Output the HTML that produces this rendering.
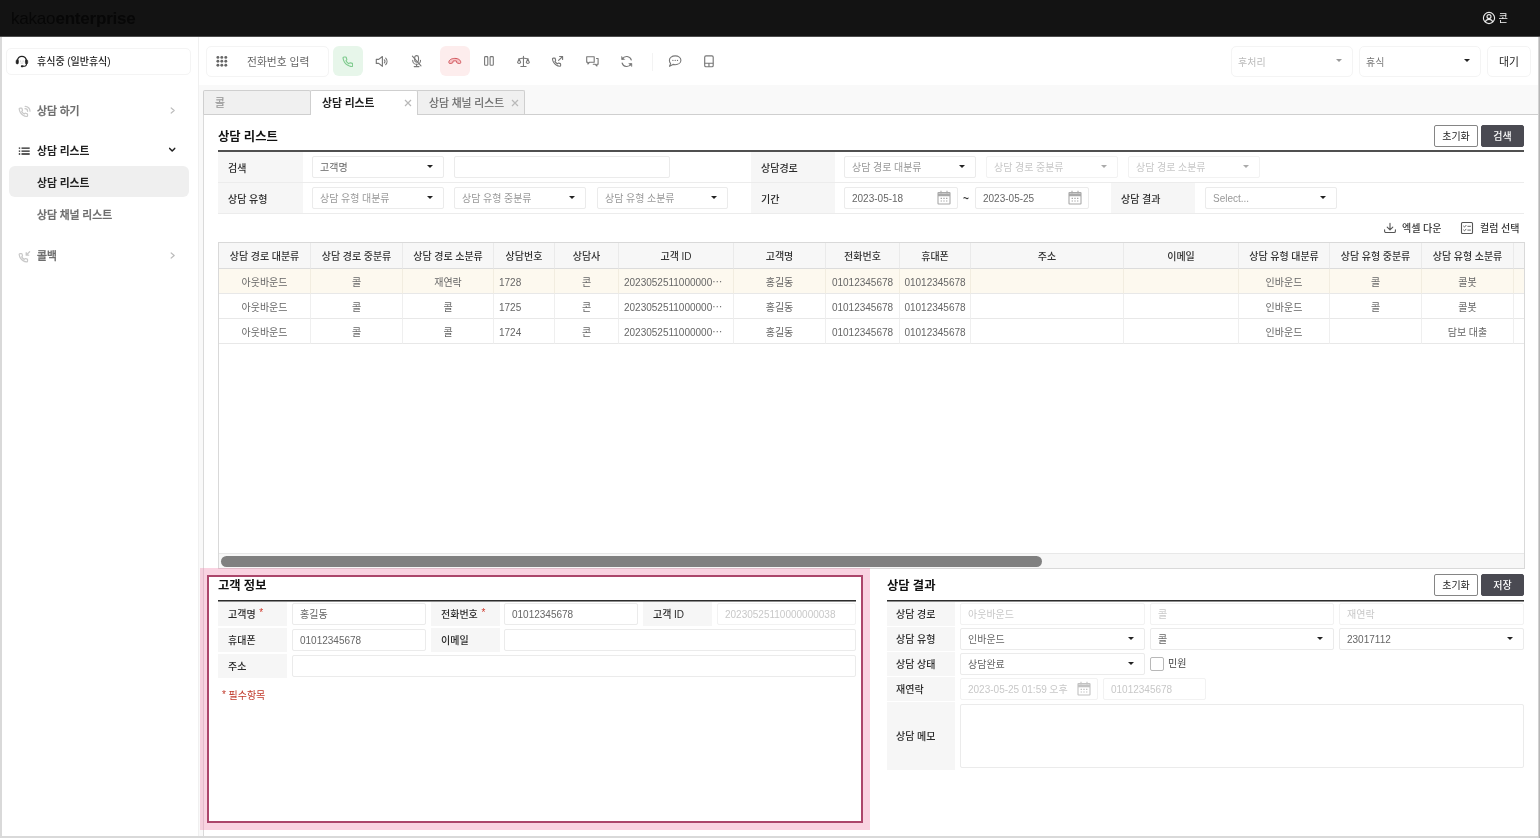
<!DOCTYPE html>
<html lang="ko">
<head>
<meta charset="utf-8">
<title>상담 리스트</title>
<style>
*{box-sizing:border-box;margin:0;padding:0}
html,body{width:1540px;height:838px;overflow:hidden}
body{position:relative;background:#f9f9f9;font-family:"Liberation Sans","Noto Sans CJK KR",sans-serif;font-size:10px;color:#333;line-height:1;word-spacing:-0.02em}
.abs{position:absolute}
svg{display:block}
/* frame */
#frameL{left:0;top:36px;width:2px;height:802px;background:#d9d9d9}
#frameR{left:1538px;top:36px;width:2px;height:802px;background:linear-gradient(90deg,#d2d2d2 50%,#b6b6b6 50%)}
#frameB{left:0;top:836px;width:1538px;height:2px;background:#d9d9d9}
/* header */
#hdr{left:0;top:0;width:1540px;height:36px;background:#131313}
#logo{left:11px;top:8px;font-size:17px;line-height:22px;color:#070707;letter-spacing:-0.2px}
#logo b{font-weight:700}
#user{left:1498.500px;top:11.500px;font-size:10.200px;line-height:14px;color:#f4f4f4}
/* sidebar */
#side{left:2px;top:36px;width:196px;height:800px;background:#fff}
#sideLine{left:198px;top:36px;width:1px;height:800px;background:#f0f0f0}
#status{left:6px;top:48px;width:185px;height:27px;border:1px solid #f4f4f4;border-radius:5px;background:#fff}
#status span{position:absolute;left:30px;top:6px;font-size:10px;line-height:14px;color:#222;font-weight:500}
.mi{left:37px;font-size:10.8px;line-height:16px;color:#6e6e6e;font-weight:500;-webkit-text-stroke:0.3px}
.mi.b{-webkit-text-stroke:0}
.mi.b{font-weight:700;color:#222}
#sel{left:9px;top:166px;width:180px;height:31px;border-radius:6px;background:#efefef}
/* toolbar */
#tool{left:199px;top:36px;width:1339px;height:49px;background:#fff}
.box{border:1px solid #f4f4f4;border-radius:5px;background:#fff}
.tbtxt{font-size:10.8px;line-height:16px}
/* tabs */
.tab{top:90px;height:24px;width:108px;border:1px solid #cfcfcf;border-bottom:none;background:#f0f0f0;border-radius:2px 2px 0 0;font-size:10.8px;line-height:24px;color:#666;padding-left:11px;-webkit-text-stroke:0.200px}
.tab.on{background:#fff;color:#222;font-weight:700;z-index:3;height:25px;-webkit-text-stroke:0}
.tab svg{position:absolute;right:5px;top:8px}
#panel{left:203px;top:114px;width:1335px;height:722px;background:#fff;border-top:1px solid #cfcfcf;border-left:1px solid #dadada}

/* panel content */
.ttl{font-size:12.300px;font-weight:700;color:#111;line-height:18px}
.hr2{height:2px;background:#505050}
.btn{height:22px;border:1px solid #858585;border-radius:2px;background:#fff;font-size:10px;line-height:20px;padding-top:1px;text-align:center;color:#222}
.btn.dk{background:#4a4a52;border-color:#4a4a52;color:#fff;font-weight:500}
.lab{background:#f6f6f6;font-size:10px;font-weight:500;color:#2a2a2a;padding-left:10px;padding-top:2px}
.lab.lb{padding-left:9px;padding-top:1px}
.req{margin-left:1px;position:relative;top:-2px}
.frow{left:218px;width:1306px;height:1px;background:#ececec}
.inp{height:22px;border:1px solid #ebebeb;border-radius:2px;background:#fff;font-size:10px;line-height:22px;color:#666;padding-left:7px;white-space:nowrap;overflow:hidden}
.inp.ph{color:#999}
.inp.dis{border-color:#f2f2f2;color:#c8c8c8}
.inp u{position:absolute;right:10px;top:7.5px;width:0;height:0;border-left:3.5px solid transparent;border-right:3.5px solid transparent;border-top:3.5px solid #222}
.inp.dis u{border-top-color:#aaa}
.inp.dis .cal{opacity:.7}
.cal{position:absolute;right:6.500px;top:2px}
.lnk{font-size:10px;line-height:14px;color:#333;font-weight:500}
/* grid */
#grid{left:218px;top:242px;width:1307px;height:327px;border:1px solid #d9d9d9;background:#fff;overflow:hidden}
#grid table{border-collapse:separate;border-spacing:0;table-layout:fixed;position:absolute;left:0;top:0;width:1305px}
#grid th{height:26px;background:#f7f7f7;border-right:1px solid #eaeaea;border-bottom:1px solid #dcdcdc;font-size:10px;font-weight:500;color:#333;text-align:center;padding:3px 0 0;white-space:nowrap}
#grid td{height:25px;border-right:1px solid #efefef;border-bottom:1px solid #e8e8e8;font-size:10px;color:#666;text-align:center;padding:4px 0 0;white-space:nowrap;overflow:hidden}
#grid td.l{text-align:left;padding-left:5px}
#grid th:last-child,#grid td:last-child{border-right:none}
#grid tr.sel td{background:#fdf9ef;border-right-color:#f2ede0}
#sbar{left:0;top:310px;width:1305px;height:16px;background:#f7f7f7;border-top:1px solid #e8e8e8}
#thumb{left:2px;top:2px;width:821px;height:11px;border-radius:5.500px;background:#808080}
/* highlight */
#hlOuter{left:200px;top:568px;width:670px;height:262px;background:rgba(240,140,175,0.38)}
#hlInner{left:207px;top:575px;width:656px;height:248px;background:#fff;border:2px solid #ab466b}
.req{color:#d0392b}
</style>
</head>
<body>
<div id="wrap" style="position:absolute;left:0;top:0;width:1540px;height:838px;will-change:transform">
<div id="hdr" class="abs">
  <div id="logo" class="abs">kakao<b>enterprise</b></div>
  <svg class="abs" style="left:1481.500px;top:11.400px" width="14" height="14" viewBox="0 0 14 14" fill="none" stroke="#e8e8e8" stroke-width="1.150"><circle cx="7" cy="7" r="5.6"/><circle cx="7" cy="5.6" r="2"/><path d="M3.2 11c.6-1.8 2-2.7 3.8-2.7s3.2.9 3.8 2.7"/></svg>
  <div id="user" class="abs">콘</div>
</div>
<div id="frameL" class="abs"></div><div id="frameR" class="abs"></div><div id="frameB" class="abs"></div>

<div id="side" class="abs"></div>
<div id="sideLine" class="abs"></div>
<div id="status" class="abs"><span>휴식중 (일반휴식)</span></div>
<div id="sel" class="abs"></div>
<div class="abs mi" style="top:103px">상담 하기</div>
<div class="abs mi b" style="top:143px">상담 리스트</div>
<div class="abs mi b" style="top:175px">상담 리스트</div>
<div class="abs mi" style="top:207px">상담 채널 리스트</div>
<div class="abs mi" style="top:248px">콜백</div>

<svg class="abs" style="left:15px;top:55px" width="14" height="13" viewBox="0 0 14 13" fill="none" stroke="#222" stroke-width="1.3" stroke-linecap="round"><path d="M2.600 6.200V5.600a4.300 4.300 0 0 1 8.600 0v.6"/><rect x="1.100" y="4.900" width="2.300" height="4" rx="1" fill="#222" stroke-width=".6"/><rect x="10.400" y="4.900" width="2.300" height="4" rx="1" fill="#222" stroke-width=".6"/><path d="M11.500 8.900c0 1.600-1.400 2.400-3.400 2.400" stroke-width="1.100"/><rect x="5.800" y="10.300" width="2.800" height="1.900" rx=".9" fill="#222" stroke="none"/><path d="M5.700 5.700v1M8.100 5.700v1M5.900 8.100h2" stroke="#bbb" stroke-width=".7"/></svg>
<svg class="abs" style="left:18px;top:105px" width="13" height="13" viewBox="0 0 13 13" fill="none" stroke="#c9c9c9" stroke-width="1.250" stroke-linecap="round" stroke-linejoin="round"><g transform="translate(0.300,2.300) scale(.42)" stroke-width="2.900"><path d="M22 16.92v3a2 2 0 0 1-2.18 2 19.79 19.79 0 0 1-8.63-3.07 19.5 19.5 0 0 1-6-6 19.79 19.79 0 0 1-3.07-8.67A2 2 0 0 1 4.11 2h3a2 2 0 0 1 2 1.72 12.84 12.84 0 0 0 .7 2.81 2 2 0 0 1-.45 2.11L8.09 9.910a16 16 0 0 0 6 6l1.27-1.27a2 2 0 0 1 2.11-.45 12.84 12.84 0 0 0 2.81.7A2 2 0 0 1 22 16.920z"/></g><path d="M7 3.700a2.600 2.600 0 0 1 2.600 2.600M7.200 1.400a4.800 4.800 0 0 1 4.800 4.800"/></svg>
<svg class="abs" style="left:18px;top:146px" width="13" height="10" viewBox="0 0 13 10" fill="none" stroke="#222" stroke-width="1.300"><path d="M.8 2.200h1.400M3.500 2.200h8.200M.8 5.100h1.400M3.500 5.100h8.200M.8 8h1.400M3.500 8h8.200"/></svg>
<svg class="abs" style="left:18px;top:250px" width="14" height="13" viewBox="0 0 14 13" fill="none" stroke="#c9c9c9" stroke-width="1.250" stroke-linecap="round" stroke-linejoin="round"><g transform="translate(0.300,2.700) scale(.42)" stroke-width="2.900"><path d="M22 16.92v3a2 2 0 0 1-2.18 2 19.79 19.79 0 0 1-8.63-3.07 19.5 19.5 0 0 1-6-6 19.79 19.79 0 0 1-3.07-8.67A2 2 0 0 1 4.11 2h3a2 2 0 0 1 2 1.72 12.84 12.84 0 0 0 .7 2.81 2 2 0 0 1-.45 2.11L8.09 9.910a16 16 0 0 0 6 6l1.27-1.27a2 2 0 0 1 2.11-.45 12.84 12.84 0 0 0 2.81.7A2 2 0 0 1 22 16.920z"/></g><path d="M11.600 1.700L8.200 5.100M8.200 2.700v2.500h2.500"/></svg>
<svg class="abs" style="left:169px;top:106px" width="8" height="9" viewBox="0 0 8 9" fill="none" stroke="#bdbdbd" stroke-width="1.200" stroke-linecap="round" stroke-linejoin="round"><path d="M2.200 2l3 2.500-3 2.500"/></svg>
<svg class="abs" style="left:168px;top:146px" width="9" height="8" viewBox="0 0 9 8" fill="none" stroke="#222" stroke-width="1.500" stroke-linecap="round" stroke-linejoin="round"><path d="M1.700 2.400l2.500 2.600 2.500-2.600"/></svg>
<svg class="abs" style="left:169px;top:251px" width="8" height="9" viewBox="0 0 8 9" fill="none" stroke="#bdbdbd" stroke-width="1.200" stroke-linecap="round" stroke-linejoin="round"><path d="M2.200 2l3 2.500-3 2.500"/></svg>
<div id="tool" class="abs"></div>
<div class="abs box" style="left:206px;top:46px;width:123px;height:31px"></div>
<div class="abs tbtxt" style="left:247px;top:54px;color:#666">전화번호 입력</div>
<div class="abs" style="left:333px;top:46px;width:30px;height:30px;border-radius:6px;background:#e7f6ea"></div>
<div class="abs" style="left:440px;top:46px;width:30px;height:30px;border-radius:6px;background:#fdeded"></div>
<svg class="abs" style="left:215px;top:55px" width="14" height="14" viewBox="0 0 14 14" fill="#666"><circle cx="2.9" cy="2.4" r="1.45"/><circle cx="6.8" cy="2.4" r="1.45"/><circle cx="10.8" cy="2.4" r="1.45"/><circle cx="2.9" cy="6.3" r="1.45"/><circle cx="6.8" cy="6.3" r="1.45"/><circle cx="10.8" cy="6.3" r="1.45"/><circle cx="2.9" cy="10.2" r="1.45"/><circle cx="6.8" cy="10.2" r="1.45"/><circle cx="10.8" cy="10.2" r="1.45"/></svg>
<svg class="abs" style="left:341.700px;top:55.600px" width="11.600" height="11.600" viewBox="0 0 24 24" fill="none" stroke="#7fcb8e" stroke-width="2.400" stroke-linejoin="round"><path d="M22 16.92v3a2 2 0 0 1-2.18 2 19.79 19.79 0 0 1-8.63-3.07 19.5 19.5 0 0 1-6-6 19.79 19.79 0 0 1-3.07-8.67A2 2 0 0 1 4.11 2h3a2 2 0 0 1 2 1.72 12.84 12.84 0 0 0 .7 2.81 2 2 0 0 1-.45 2.11L8.09 9.910a16 16 0 0 0 6 6l1.27-1.27a2 2 0 0 1 2.11-.45 12.84 12.84 0 0 0 2.81.7A2 2 0 0 1 22 16.920z"/></svg>
<svg class="abs" style="left:375px;top:55px" width="14" height="13" viewBox="0 0 14 13" fill="none" stroke="#777" stroke-width="1.15" stroke-linejoin="round" stroke-linecap="round"><path d="M1.3 4.4h2.4l3.7-2.9v9.8l-3.7-2.9H1.3z"/><path d="M9.3 4.9a2 2 0 0 1 0 3"/><path d="M10.7 3.2a4.6 4.6 0 0 1 0 6.4"/></svg>
<svg class="abs" style="left:410px;top:54px" width="14" height="14" viewBox="0 0 14 14" fill="none" stroke="#777" stroke-width="1.1" stroke-linecap="round"><rect x="4.7" y="1.6" width="3.8" height="6.6" rx="1.9"/><path d="M2.7 6.4a3.9 3.9 0 0 0 7.8 0"/><path d="M6.6 10.4v2.1M4.2 12.6h4.8"/><path d="M2.4 2.2l8.6 9.6"/></svg>
<svg class="abs" style="left:447px;top:56px" width="16" height="10" viewBox="0 0 16 10" fill="#f7c3c6" stroke="#d1555b" stroke-width="1" stroke-linejoin="round"><path d="M1.9 6.6c-.3-2.6 2.6-4.2 5.9-4.2s6.200 1.600 5.900 4.200c-.1.800-.6 1-1.200.9l-2-.4c-.6-.1-.9-.5-.9-1.100v-.900c-.6-.300-3-.300-3.600 0v.900c0 .600-.3 1-.9 1.100l-2 .4c-.6.100-1.100-.100-1.200-.900z"/></svg>
<svg class="abs" style="left:483px;top:55px" width="12" height="12" viewBox="0 0 12 12" fill="none" stroke="#777" stroke-width="1.1"><rect x="1.6" y="1.6" width="3.2" height="8.7" rx=".9"/><rect x="7.1" y="1.6" width="3.2" height="8.700" rx=".9"/></svg>
<svg class="abs" style="left:516px;top:55px" width="15" height="13" viewBox="0 0 15 13" fill="none" stroke="#777" stroke-width="1.05" stroke-linecap="round" stroke-linejoin="round"><path d="M7.450 1.300v10M4.800 11.500h5.300M2.600 3.900l4.850-1 4.850 1"/><path d="M1.500 7.400l1.600-3.300 1.600 3.300a1.700 1.500 0 0 1-3.200 0zM10.200 7.400l1.600-3.300 1.600 3.300a1.700 1.500 0 0 1-3.200 0z"/></svg>
<svg class="abs" style="left:551px;top:55px" width="14" height="13" viewBox="0 0 14 13" fill="none" stroke="#777" stroke-width="1.1" stroke-linejoin="round" stroke-linecap="round"><g transform="translate(0.600,2.300) scale(.41)" stroke-width="2.700"><path d="M22 16.92v3a2 2 0 0 1-2.18 2 19.79 19.79 0 0 1-8.63-3.07 19.5 19.5 0 0 1-6-6 19.79 19.79 0 0 1-3.07-8.67A2 2 0 0 1 4.11 2h3a2 2 0 0 1 2 1.72 12.84 12.84 0 0 0 .7 2.81 2 2 0 0 1-.45 2.11L8.09 9.910a16 16 0 0 0 6 6l1.27-1.27a2 2 0 0 1 2.11-.45 12.84 12.84 0 0 0 2.81.7A2 2 0 0 1 22 16.920z"/></g><path d="M7.600 5.300l4-3.800M8.600 1.500h3v3"/></svg>
<svg class="abs" style="left:585px;top:55px" width="15" height="13" viewBox="0 0 15 13" fill="none" stroke="#777" stroke-width="1.1" stroke-linejoin="round" stroke-linecap="round"><path d="M1.700 1.700h7.500v5.500H4.600L2.900 9V7.200H1.700z"/><path d="M11.500 3.500h1.600v5.700h-1.200V11l-1.900-1.800H8.300"/></svg>
<svg class="abs" style="left:620px;top:55px" width="14" height="13" viewBox="0 0 14 13" fill="none" stroke="#777" stroke-width="1.1" stroke-linecap="round" stroke-linejoin="round"><path d="M11.300 5A4.800 4.800 0 0 0 2.400 4.100M2.100 8a4.800 4.800 0 0 0 8.900.9"/><path d="M1.600 1.800v2.700h2.700zM11.800 11.200V8.500H9.100z" fill="#777" stroke-width=".6"/></svg>
<div class="abs" style="left:652px;top:53px;width:1px;height:18px;background:#f3f3f3"></div>
<svg class="abs" style="left:667px;top:54px" width="16" height="14" viewBox="0 0 16 14" fill="none" stroke="#777" stroke-width="1.1" stroke-linejoin="round"><path d="M8.200 1.900c3.200 0 5.700 1.900 5.700 4.400s-2.500 4.400-5.700 4.400c-.8 0-1.500-.1-2.200-.3L2.500 12.300l1.100-2.700C2.900 8.800 2.400 7.600 2.400 6.300c0-2.500 2.600-4.400 5.800-4.400z"/><g fill="#777" stroke="none"><circle cx="5.900" cy="6.400" r=".65"/><circle cx="8.200" cy="6.400" r=".65"/><circle cx="10.500" cy="6.400" r=".65"/></g></svg>
<svg class="abs" style="left:703px;top:54px" width="12" height="14" viewBox="0 0 12 14" fill="none" stroke="#777" stroke-width="1.15"><rect x="1.700" y="1.900" width="8.500" height="10.800" rx="1.300"/><path d="M1.700 9.200h8.500M5.950 9.200v3.500"/></svg>
<div class="abs box" style="left:1231px;top:46px;width:122px;height:31px"></div>
<div class="abs tbtxt" style="left:1238px;top:55px;color:#bbb;font-size:10px">후처리</div>
<div class="abs box" style="left:1359px;top:46px;width:122px;height:31px"></div>
<div class="abs tbtxt" style="left:1366px;top:55px;color:#777;font-size:10px">휴식</div>
<div class="abs box" style="left:1487px;top:46px;width:44px;height:31px"></div>
<div class="abs tbtxt" style="left:1499px;top:54px;color:#222">대기</div>

<div class="abs" style="left:1336px;top:59px;border-left:3.5px solid transparent;border-right:3.5px solid transparent;border-top:3.500px solid #999"></div>
<div class="abs" style="left:1464px;top:59px;border-left:3.5px solid transparent;border-right:3.5px solid transparent;border-top:3.500px solid #222"></div>
<div class="abs" style="left:0;top:36px;width:1540px;height:1px;background:#4c4c4c;z-index:5"></div>
<div class="abs tab" style="left:203px;color:#999">콜</div>
<div class="abs tab on" style="left:310px">상담 리스트<svg width="8" height="8" viewBox="0 0 8 8" stroke="#b8b8b8" stroke-width="1.200" fill="none"><path d="M1 1l6 6M7 1l-6 6"/></svg></div>
<div class="abs tab" style="left:416px;width:109px;padding-left:12px">상담 채널 리스트<svg width="8" height="8" viewBox="0 0 8 8" stroke="#b8b8b8" stroke-width="1.200" fill="none"><path d="M1 1l6 6M7 1l-6 6"/></svg></div>
<div id="panel" class="abs"></div>
<div class="abs ttl" style="left:218px;top:128px">상담 리스트</div>
<div class="abs btn" style="left:1434px;top:125px;width:44px">초기화</div>
<div class="abs btn dk" style="left:1481px;top:125px;width:43px">검색</div>
<div class="abs hr2" style="left:218px;top:150px;width:1306px"></div>
<div class="abs lab" style="left:218px;top:152px;width:85px;height:30px;line-height:30px">검색</div>
<div class="abs lab" style="left:218px;top:183px;width:85px;height:30px;line-height:30px">상담 유형</div>
<div class="abs lab" style="left:751px;top:152px;width:84px;height:30px;line-height:30px">상담경로</div>
<div class="abs lab" style="left:751px;top:183px;width:84px;height:30px;line-height:30px">기간</div>
<div class="abs lab" style="left:1111px;top:183px;width:84px;height:30px;line-height:30px">상담 결과</div>
<div class="abs frow" style="top:182px"></div><div class="abs frow" style="top:213px"></div>
<div class="abs inp " style="left:312px;top:156px;width:132px">고객명<u></u></div>
<div class="abs inp " style="left:454px;top:156px;width:216px"></div>
<div class="abs inp ph" style="left:312px;top:187px;width:132px">상담 유형 대분류<u></u></div>
<div class="abs inp ph" style="left:454px;top:187px;width:132px">상담 유형 중분류<u></u></div>
<div class="abs inp ph" style="left:597px;top:187px;width:131px">상담 유형 소분류<u></u></div>
<div class="abs inp ph" style="left:844px;top:156px;width:132px">상담 경로 대분류<u></u></div>
<div class="abs inp dis" style="left:986px;top:156px;width:132px">상담 경로 중분류<u></u></div>
<div class="abs inp dis" style="left:1128px;top:156px;width:132px">상담 경로 소분류<u></u></div>
<div class="abs inp " style="left:844px;top:187px;width:114px">2023-05-18<svg class="cal" width="14" height="15" viewBox="0 0 14 15" fill="none" stroke="#a8a8a8" stroke-width="1.1"><rect x="1" y="2.600" width="12" height="11.400" rx=".5"/><path d="M1 4.900h12" stroke-width="2.800"/><path d="M4 0.8v2.6M10 0.8v2.6"/><path d="M3.6 8.4h1.4M6.3 8.4h1.4M9 8.4h1.4M3.6 11h1.4M6.3 11h1.4M9 11h1.4" stroke-width="1.2"/></svg></div>
<div class="abs" style="left:963px;top:192px;font-size:10px;line-height:14px;color:#333;font-weight:700">~</div>
<div class="abs inp " style="left:975px;top:187px;width:114px">2023-05-25<svg class="cal" width="14" height="15" viewBox="0 0 14 15" fill="none" stroke="#a8a8a8" stroke-width="1.1"><rect x="1" y="2.600" width="12" height="11.400" rx=".5"/><path d="M1 4.900h12" stroke-width="2.800"/><path d="M4 0.8v2.6M10 0.8v2.6"/><path d="M3.6 8.4h1.4M6.3 8.4h1.4M9 8.4h1.4M3.6 11h1.4M6.3 11h1.4M9 11h1.4" stroke-width="1.2"/></svg></div>
<div class="abs inp ph" style="left:1205px;top:187px;width:132px">Select...<u></u></div>
<svg class="abs" style="left:1383px;top:222px" width="14" height="12" viewBox="0 0 14 12" fill="none" stroke="#555" stroke-width="1.100" stroke-linecap="round" stroke-linejoin="round"><path d="M7 1.400v6.200M4.200 5.200L7 7.900l2.800-2.700M1.600 7.700v1.500a1.300 1.300 0 0 0 1.300 1.300h8.200a1.300 1.300 0 0 0 1.300-1.300V7.700"/></svg>
<svg class="abs" style="left:1460px;top:221px" width="14" height="14" viewBox="0 0 14 14" fill="none" stroke="#555" stroke-width="1.100" stroke-linecap="round" stroke-linejoin="round"><rect x="1.500" y="1.500" width="11" height="11" rx="1"/><path d="M3.600 5.200l.9.900 1.500-1.700M3.600 9l.9.900 1.500-1.700M7.800 5.300h2.700M7.800 9.100h2.700" stroke-width=".9"/></svg>
<div class="abs lnk" style="left:1402px;top:222px">엑셀 다운</div>
<div class="abs lnk" style="left:1480px;top:222px">컬럼 선택</div>
<div id="grid" class="abs"><table><colgroup><col style="width:92px"><col style="width:92px"><col style="width:91px"><col style="width:61px"><col style="width:64px"><col style="width:115px"><col style="width:92px"><col style="width:74px"><col style="width:71px"><col style="width:153px"><col style="width:115px"><col style="width:91px"><col style="width:92px"><col style="width:92px"><col style="width:10px"></colgroup>
<tr><th>상담 경로 대분류</th><th>상담 경로 중분류</th><th>상담 경로 소분류</th><th>상담번호</th><th>상담사</th><th>고객 ID</th><th>고객명</th><th>전화번호</th><th>휴대폰</th><th>주소</th><th>이메일</th><th>상담 유형 대분류</th><th>상담 유형 중분류</th><th>상담 유형 소분류</th><th></th></tr>
<tr class="sel"><td>아웃바운드</td><td>콜</td><td>재연락</td><td class="l">1728</td><td>콘</td><td class="l">2023052511000000⋯</td><td>홍길동</td><td>01012345678</td><td>01012345678</td><td></td><td></td><td>인바운드</td><td>콜</td><td>콜봇</td><td></td></tr>
<tr><td>아웃바운드</td><td>콜</td><td>콜</td><td class="l">1725</td><td>콘</td><td class="l">2023052511000000⋯</td><td>홍길동</td><td>01012345678</td><td>01012345678</td><td></td><td></td><td>인바운드</td><td>콜</td><td>콜봇</td><td></td></tr>
<tr><td>아웃바운드</td><td>콜</td><td>콜</td><td class="l">1724</td><td>콘</td><td class="l">2023052511000000⋯</td><td>홍길동</td><td>01012345678</td><td>01012345678</td><td></td><td></td><td>인바운드</td><td></td><td>담보 대출</td><td></td></tr>
</table><div id="sbar" class="abs"><div id="thumb" class="abs"></div></div></div>
<div id="hlOuter" class="abs"></div><div id="hlInner" class="abs"></div>
<div class="abs ttl" style="left:218px;top:577px">고객 정보</div>
<div class="abs hr2" style="left:218px;top:600px;width:638px;height:2px;background:linear-gradient(#2c2c2c 50%,#8c8c8c 50%)"></div>
<div class="abs lab lb" style="left:218px;padding-left:10px;top:602px;width:69px;height:24px;line-height:24px">고객명 <span class="req">*</span></div>
<div class="abs inp " style="left:292px;top:603px;width:134px">홍길동</div>
<div class="abs lab lb" style="left:431px;padding-left:10px;top:602px;width:69px;height:24px;line-height:24px">전화번호 <span class="req">*</span></div>
<div class="abs inp " style="left:504px;top:603px;width:134px">01012345678</div>
<div class="abs lab lb" style="left:643px;padding-left:10px;top:602px;width:69px;height:24px;line-height:24px">고객 ID</div>
<div class="abs inp dis" style="left:717px;top:603px;width:139px">20230525110000000038</div>
<div class="abs lab lb" style="left:218px;padding-left:10px;top:628px;width:69px;height:24px;line-height:24px">휴대폰</div>
<div class="abs inp " style="left:292px;top:629px;width:134px">01012345678</div>
<div class="abs lab lb" style="left:431px;padding-left:10px;top:628px;width:69px;height:24px;line-height:24px">이메일</div>
<div class="abs inp " style="left:504px;top:629px;width:352px"></div>
<div class="abs lab lb" style="left:218px;padding-left:10px;top:654px;width:69px;height:24px;line-height:24px">주소</div>
<div class="abs inp " style="left:292px;top:655px;width:564px"></div>
<div class="abs" style="left:222px;top:689px;font-size:10px;line-height:14px;color:#c0392b"><span style="position:relative;top:-1px">*</span> 필수항목</div>
<div class="abs ttl" style="left:887px;top:577px">상담 결과</div>
<div class="abs btn" style="left:1434px;top:574px;width:44px">초기화</div>
<div class="abs btn dk" style="left:1481px;top:574px;width:43px">저장</div>
<div class="abs hr2" style="left:887px;top:600px;width:637px;height:2px;background:linear-gradient(#2c2c2c 50%,#8c8c8c 50%)"></div>
<div class="abs lab lb" style="left:887px;top:602px;width:68px;height:24px;line-height:24px">상담 경로</div>
<div class="abs inp dis" style="left:960px;top:603px;width:185px">아웃바운드</div>
<div class="abs inp dis" style="left:1150px;top:603px;width:184px">콜</div>
<div class="abs inp dis" style="left:1339px;top:603px;width:185px">재연락</div>
<div class="abs lab lb" style="left:887px;top:627px;width:68px;height:24px;line-height:24px">상담 유형</div>
<div class="abs inp " style="left:960px;top:628px;width:185px">인바운드<u></u></div>
<div class="abs inp " style="left:1150px;top:628px;width:184px">콜<u></u></div>
<div class="abs inp " style="left:1339px;top:628px;width:185px">23017112<u></u></div>
<div class="abs lab lb" style="left:887px;top:652px;width:68px;height:24px;line-height:24px">상담 상태</div>
<div class="abs inp " style="left:960px;top:653px;width:185px">상담완료<u></u></div>
<div class="abs" style="left:1150px;top:657px;width:14px;height:14px;border:1px solid #b8b8b8;border-radius:2px;background:#fff"></div>
<div class="abs" style="left:1168px;top:657px;font-size:10px;line-height:14px;color:#444">민원</div>
<div class="abs lab lb" style="left:887px;top:677px;width:68px;height:24px;line-height:24px">재연락</div>
<div class="abs inp dis" style="left:960px;top:678px;width:138px">2023-05-25 01:59 오후<svg class="cal" width="14" height="15" viewBox="0 0 14 15" fill="none" stroke="#a8a8a8" stroke-width="1.1"><rect x="1" y="2.600" width="12" height="11.400" rx=".5"/><path d="M1 4.900h12" stroke-width="2.800"/><path d="M4 0.8v2.6M10 0.8v2.6"/><path d="M3.6 8.4h1.4M6.3 8.4h1.4M9 8.4h1.4M3.6 11h1.4M6.3 11h1.4M9 11h1.4" stroke-width="1.2"/></svg></div>
<div class="abs inp dis" style="left:1103px;top:678px;width:103px">01012345678</div>
<div class="abs lab lb" style="left:887px;top:702px;width:68px;height:68px;line-height:67px">상담 메모</div>
<div class="abs inp " style="left:960px;top:704px;width:564px;height:64px"></div>

</div>
</body>
</html>
